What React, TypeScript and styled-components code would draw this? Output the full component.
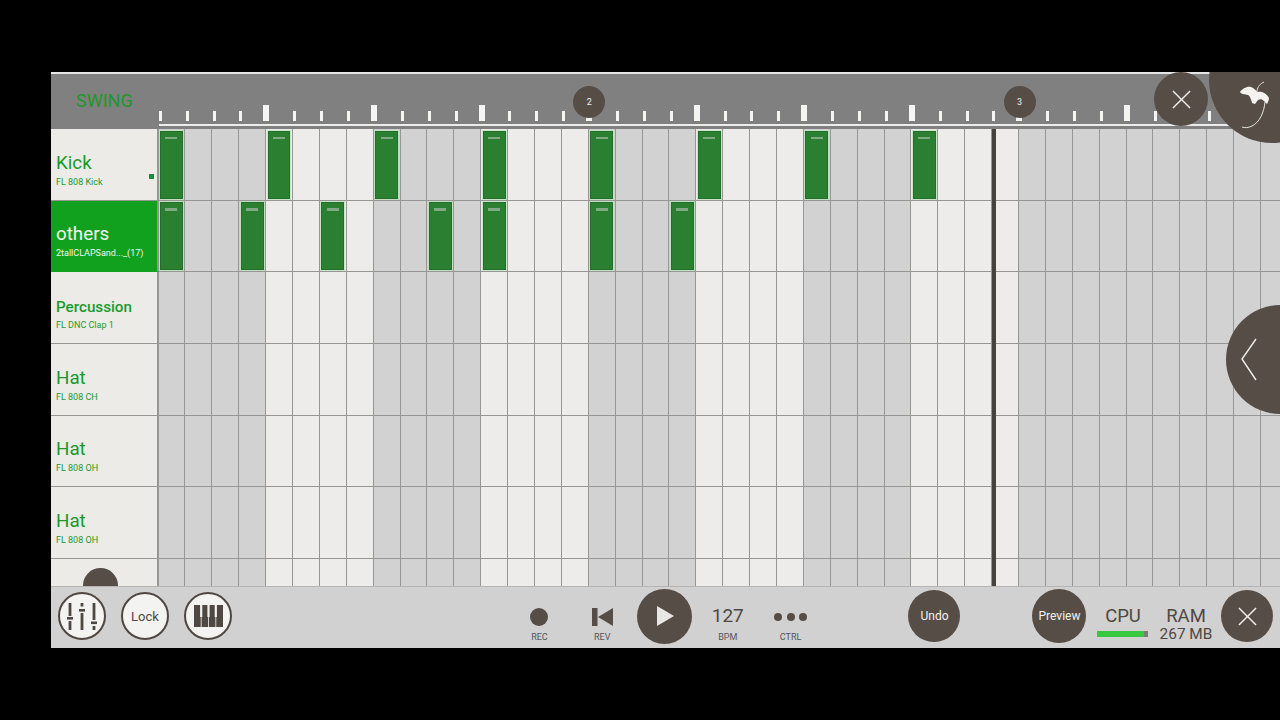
import React from "react";
import styled, { createGlobalStyle } from "styled-components";

const COL = 26.9;
const COLS = 42;
const BROWN = "#574d47";
const LINE = "#969694";

const GlobalStyle = createGlobalStyle`
  html, body {
    margin: 0;
    height: 100%;
    background: #000;
  }
  body {
    overflow: hidden;
    font-family: Roboto, "Liberation Sans", sans-serif;
  }
`;

const Page = styled.div`
  width: 1280px;
  height: 720px;
  padding: 72px 0 72px 51px;
  box-sizing: border-box;
`;

const Frame = styled.div`
  position: relative;
  width: 1229px;
  height: 576px;
  overflow: hidden;
  display: flex;
  flex-direction: column;
  background: #d1d1d1;
`;

const Header = styled.header`
  flex: none;
  height: 57px;
  box-sizing: border-box;
  display: flex;
  background: #808080;
  border-top: 2px solid #e6e6e6;
`;

const Swing = styled.div`
  flex: none;
  width: 107.5px;
  padding: 16px 0 0 25px;
  box-sizing: border-box;
  font-size: 18px;
  line-height: 22px;
  color: #1f962c;
`;

const Ruler = styled.div`
  flex: 1;
  height: 52px;
  display: flex;
  align-items: flex-end;
  overflow: hidden;
  border-bottom: 2px solid #ececea;
  box-sizing: border-box;
  padding-bottom: 3px;
`;

const TickSlot = styled.div`
  position: relative;
  flex: none;
  width: ${COL}px;
  height: 16px;
  display: flex;
  align-items: flex-end;
`;

const Tick = styled.div<{ $major: boolean }>`
  background: #f4f4f2;
  width: ${(p) => (p.$major ? 6 : 3)}px;
  height: ${(p) => (p.$major ? 16 : 10)}px;
  margin-left: ${(p) => (p.$major ? -2.6 : 0.3)}px;
`;

const BarMarker = styled.div`
  position: absolute;
  left: -15.5px;
  top: -19px;
  width: 32px;
  height: 32px;
  border-radius: 50%;
  background: ${BROWN};
  color: #eee;
  font-size: 9px;
  display: flex;
  align-items: center;
  justify-content: center;
`;

const Body = styled.main`
  flex: 1;
  min-height: 0;
  overflow: hidden;
`;

const Row = styled.div`
  display: flex;
  height: 71.7px;
`;

const Channel = styled.div<{ $selected?: boolean }>`
  position: relative;
  flex: none;
  width: 107.5px;
  box-sizing: border-box;
  display: flex;
  flex-direction: column;
  justify-content: flex-end;
  padding: 0 0 12px 5px;
  background: ${(p) => (p.$selected ? "#12a01f" : "#ecebe8")};
  color: ${(p) => (p.$selected ? "#f2f7f0" : "#1b9a2b")};
  border-right: 2px solid ${LINE};
  border-bottom: 1px solid ${(p) => (p.$selected ? "#12a01f" : LINE)};
`;

const ChannelName = styled.div<{ $small?: boolean }>`
  font-size: ${(p) => (p.$small ? 15.2 : 18.8)}px;
  font-weight: ${(p) => (p.$small ? 500 : 400)};
  line-height: 24px;
  white-space: nowrap;
  margin-bottom: ${(p) => (p.$small ? -1 : 0)}px;
`;

const ChannelSample = styled.div`
  font-size: 9px;
  line-height: 12px;
  white-space: nowrap;
  margin-top: 1px;
`;

const ActiveDot = styled.span`
  position: absolute;
  right: 3px;
  bottom: 21px;
  width: 5px;
  height: 5px;
  background: #1f8a3c;
`;

const Steps = styled.div`
  display: grid;
  grid-template-columns: repeat(${COLS}, ${COL}px);
`;

const Step = styled.div<{ $dark: boolean }>`
  box-sizing: border-box;
  display: flex;
  padding: 1.5px 1.5px 1px 1.5px;
  background: ${(p) => (p.$dark ? "#d2d2d2" : "#edecea")};
  border-right: 1px solid ${LINE};
  border-bottom: 1px solid ${LINE};
`;

const Note = styled.div`
  flex: 1;
  background: #2a7f30;
  border: 1px solid #23702a;
  box-shadow: 0 0 0 1px rgba(190, 225, 190, 0.75);
  display: flex;
  justify-content: center;
  padding-top: 5px;
  box-sizing: border-box;
`;

const NoteGrip = styled.span`
  width: 12px;
  height: 2.5px;
  background: #82a884;
`;

const LastRowBump = styled.span`
  position: absolute;
  left: 32px;
  top: 9px;
  width: 35px;
  height: 35px;
  border-radius: 50%;
  background: ${BROWN};
`;

const Playhead = styled.div`
  position: absolute;
  left: 941px;
  top: 57px;
  bottom: 62px;
  width: 4px;
  background: #45413c;
`;

const Footer = styled.footer`
  flex: none;
  height: 62px;
  display: flex;
  align-items: center;
  padding: 0 0 3px 7px;
  background: #d1d1d1;
  border-top: 1px solid #b5b5b5;
  box-sizing: border-box;
`;

const RoundOutline = styled.button`
  flex: none;
  width: 48px;
  height: 48px;
  margin-right: 15px;
  padding: 0;
  border-radius: 50%;
  border: 2px solid #4f4742;
  background: #f3f3f1;
  color: #4f4742;
  font: 13px Roboto, sans-serif;
  display: flex;
  align-items: center;
  justify-content: center;
`;

const Transport = styled.div`
  flex: none;
  display: flex;
  margin-left: 261px;
`;

const TransportItem = styled.div<{ $center?: boolean }>`
  width: 62.8px;
  height: 52px;
  display: flex;
  flex-direction: column;
  align-items: center;
  justify-content: ${(p) => (p.$center ? "center" : "flex-end")};
  color: #4f4742;
`;

const ItemGlyph = styled.div`
  height: 28px;
  display: flex;
  align-items: center;
  justify-content: center;
`;

const ItemLabel = styled.div`
  font-size: 9px;
  line-height: 12px;
  margin-bottom: -1px;
  color: #555;
`;

const RecDot = styled.span`
  width: 18px;
  height: 18px;
  border-radius: 50%;
  background: ${BROWN};
`;

const Bpm = styled.span`
  font-size: 19px;
  margin-top: -3px;
  color: #4f4742;
`;

const CtrlDots = styled.span`
  display: flex;
  gap: 4.5px;
  span {
    width: 8px;
    height: 8px;
    border-radius: 50%;
    background: ${BROWN};
  }
`;

const RoundSolid = styled.button<{ $size: number; $gap?: number }>`
  flex: none;
  width: ${(p) => p.$size}px;
  height: ${(p) => p.$size}px;
  margin-left: ${(p) => p.$gap ?? 0}px;
  padding: 0;
  border: none;
  border-radius: 50%;
  background: ${BROWN};
  color: #f3f1ee;
  font: 12px Roboto, sans-serif;
  display: flex;
  align-items: center;
  justify-content: center;
`;

const Stats = styled.div`
  flex: none;
  display: flex;
  align-self: flex-end;
  margin: 0 0 -3px 5px;
`;

const Stat = styled.div`
  width: 63px;
  height: 44px;
  display: flex;
  flex-direction: column;
  align-items: center;
  color: #4f4742;
  font-size: 18.5px;
  line-height: 24px;
`;

const StatValue = styled.div`
  font-size: 15.4px;
  line-height: 16px;
  margin-top: -2px;
  white-space: nowrap;
`;

const CpuTrack = styled.div`
  width: 51px;
  height: 6px;
  margin-top: 3px;
  background: #7b7b7b;
`;

const CpuFill = styled.div`
  height: 100%;
  background: #38c840;
`;

const LogoButton = styled.div`
  position: absolute;
  left: 1158px;
  top: -55px;
  width: 126px;
  height: 126px;
  border-radius: 50%;
  background: ${BROWN};
`;

const LogoMark = styled.svg`
  position: absolute;
  left: 27px;
  top: 61px;
`;

const CloseFloat = styled(RoundSolid)`
  position: absolute;
  left: 1103px;
  top: 0;
`;

const SideTab = styled.div`
  position: absolute;
  left: 1175px;
  top: 233px;
  width: 108px;
  height: 109px;
  border-radius: 50%;
  background: ${BROWN};
  display: flex;
  align-items: center;
  padding-left: 15px;
  box-sizing: border-box;
`;

const rows = [
  { name: "Kick", sample: "FL 808 Kick", notes: [0, 4, 8, 12, 16, 20, 24, 28], dot: true },
  { name: "others", sample: "2tallCLAPSand..._(17)", notes: [0, 3, 6, 10, 12, 16, 19], selected: true },
  { name: "Percussion", sample: "FL DNC Clap 1", notes: [], small: true },
  { name: "Hat", sample: "FL 808 CH", notes: [] },
  { name: "Hat", sample: "FL 808 OH", notes: [] },
  { name: "Hat", sample: "FL 808 OH", notes: [] },
];

// the pattern ends at step 32, everything after it stays grey
const isDark = (col: number) => col >= 32 || Math.floor(col / 4) % 2 === 0;
const columns = Array.from({ length: COLS }, (_, i) => i);

function StepCells({ notes = [] as number[] }) {
  return (
    <Steps>
      {columns.map((c) => (
        <Step key={c} $dark={isDark(c)}>
          {notes.includes(c) && (
            <Note>
              <NoteGrip />
            </Note>
          )}
        </Step>
      ))}
    </Steps>
  );
}

const Cross = ({ size }: { size: number }) => (
  <svg width={size} height={size} viewBox="0 0 20 20" fill="none" stroke="#f3f1ee" strokeWidth="1.5">
    <path d="M1 1 L19 19 M19 1 L1 19" />
  </svg>
);

const MixerIcon = () => (
  <svg width="44" height="44" viewBox="2 2 44 44" fill="#4f4742">
    <rect x="10.6" y="11" width="2.8" height="13" />
    <rect x="9" y="25" width="6" height="2.6" />
    <rect x="10.6" y="29" width="2.8" height="9" />
    <rect x="22.6" y="11" width="2.8" height="3.5" />
    <rect x="21" y="17" width="6" height="2.6" />
    <rect x="22.6" y="21" width="2.8" height="17" />
    <rect x="34.6" y="11" width="2.8" height="17" />
    <rect x="33" y="29.5" width="6" height="2.6" />
    <rect x="34.6" y="34" width="2.8" height="4" />
  </svg>
);

const PianoIcon = () => (
  <svg width="29" height="22" viewBox="0 0 29 22">
    <rect width="29" height="22" fill="#4f4742" />
    <path d="M7.2 0 V12 M14.5 0 V12 M21.8 0 V12" stroke="#f3f3f1" strokeWidth="2.2" />
    <path d="M7.2 12 V22 M14.5 12 V22 M21.8 12 V22" stroke="#f3f3f1" strokeWidth="0.8" />
  </svg>
);

export default function App() {
  return (
    <Page>
      <GlobalStyle />
      <Frame>
        <Header>
          <Swing>SWING</Swing>
          <Ruler>
            {columns.map((c) => (
              <TickSlot key={c}>
                <Tick $major={c % 4 === 0 && c > 0} />
                {c === 16 && <BarMarker>2</BarMarker>}
                {c === 32 && <BarMarker>3</BarMarker>}
              </TickSlot>
            ))}
          </Ruler>
        </Header>

        <Body>
          {rows.map((r, i) => (
            <Row key={i}>
              <Channel $selected={r.selected}>
                <ChannelName $small={r.small}>{r.name}</ChannelName>
                <ChannelSample>{r.sample}</ChannelSample>
                {r.dot && <ActiveDot />}
              </Channel>
              <StepCells notes={r.notes} />
            </Row>
          ))}
          <Row>
            <Channel>
              <LastRowBump />
            </Channel>
            <StepCells />
          </Row>
        </Body>

        <Footer>
          <RoundOutline>
            <MixerIcon />
          </RoundOutline>
          <RoundOutline>Lock</RoundOutline>
          <RoundOutline>
            <PianoIcon />
          </RoundOutline>

          <Transport>
            <TransportItem>
              <ItemGlyph>
                <RecDot />
              </ItemGlyph>
              <ItemLabel>REC</ItemLabel>
            </TransportItem>
            <TransportItem>
              <ItemGlyph>
                <svg width="21" height="18" viewBox="0 0 21 18" fill="#574d47">
                  <rect x="0" y="0" width="5.5" height="18" />
                  <path d="M6 9 L21 0 V18 Z" />
                </svg>
              </ItemGlyph>
              <ItemLabel>REV</ItemLabel>
            </TransportItem>
            <TransportItem $center>
              <RoundSolid $size={55}>
                <svg width="18" height="20" viewBox="0 0 18 20" fill="#e9e7e3">
                  <path d="M1 0 L18 10 L1 20 Z" />
                </svg>
              </RoundSolid>
            </TransportItem>
            <TransportItem>
              <ItemGlyph>
                <Bpm>127</Bpm>
              </ItemGlyph>
              <ItemLabel>BPM</ItemLabel>
            </TransportItem>
            <TransportItem>
              <ItemGlyph>
                <CtrlDots>
                  <span />
                  <span />
                  <span />
                </CtrlDots>
              </ItemGlyph>
              <ItemLabel>CTRL</ItemLabel>
            </TransportItem>
          </Transport>

          <RoundSolid $size={52} $gap={86.5}>
            Undo
          </RoundSolid>
          <RoundSolid $size={54} $gap={72}>
            Preview
          </RoundSolid>

          <Stats>
            <Stat>
              CPU
              <CpuTrack>
                <CpuFill style={{ width: "91%" }} />
              </CpuTrack>
            </Stat>
            <Stat>
              RAM
              <StatValue>267 MB</StatValue>
            </Stat>
          </Stats>
          <RoundSolid $size={52} $gap={4}>
            <Cross size={19} />
          </RoundSolid>
        </Footer>

        <Playhead />

        <CloseFloat $size={54}>
          <Cross size={19} />
        </CloseFloat>
        <LogoButton>
          <LogoMark width="40" height="54" viewBox="1236 78 40 54">
            <path
              d="M1240 92 C1242 89 1247 86 1251 87 C1254 88 1256 91 1258 92 C1262 91 1267 94 1269 98 C1269 100 1268 102 1267 104 L1264 101 C1262 99 1260 99 1258 100 L1255 104 L1252 103 C1251 99 1250 96 1248 95 C1245 94 1242 95 1240 92 Z"
              fill="#f5f3ef"
            />
            <path
              d="M1264 82 C1260 84 1258 86 1257 91 M1265 102 C1264 112 1260 122 1252 126 C1248 128 1245 128 1242 127"
              fill="none"
              stroke="#e9e6e1"
              strokeWidth="1"
            />
          </LogoMark>
        </LogoButton>
        <SideTab>
          <svg width="16" height="44" viewBox="0 0 16 44" fill="none" stroke="#f0eeea" strokeWidth="1.4">
            <path d="M15 1 L1 21 L15 42" />
          </svg>
        </SideTab>
      </Frame>
    </Page>
  );
}
